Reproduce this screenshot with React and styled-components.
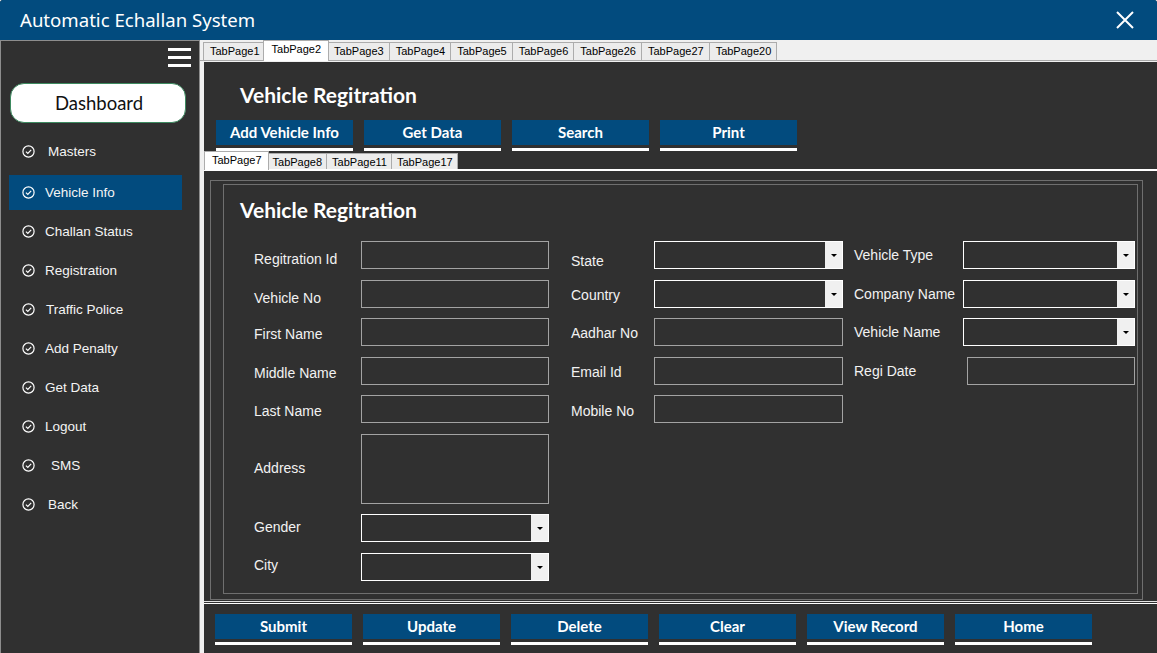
import React from "react";
import styled, { createGlobalStyle } from "styled-components";

const BLUE = "#024b7e";
const DARK = "#303030";
const LINE = "#6f6f6f";

const GlobalStyle = createGlobalStyle`
  html, body { margin: 0; padding: 0; background: #ffffff; }
  body { font-family: "Liberation Sans", Arial, sans-serif; }
  *, *::before, *::after { box-sizing: border-box; }
`;

const Window = styled.div`
  width: 1157px;
  height: 653px;
  display: flex;
  flex-direction: column;
  overflow: hidden;
  background: ${DARK};
  border-top-left-radius: 3px;
  border-top-right-radius: 3px;
`;

const TitleBar = styled.header`
  height: 40px;
  flex: none;
  background: ${BLUE};
  display: flex;
  align-items: center;
  justify-content: space-between;
  padding: 0 23px 0 20px;
`;

const Title = styled.h1`
  margin: 0;
  font: 400 18.6px/24px "Noto Sans", "Open Sans", sans-serif;
  color: #ffffff;
`;

const CloseButton = styled.button`
  width: 18px;
  height: 18px;
  padding: 0;
  border: 0;
  background: none;
  display: flex;
`;

const Body = styled.div`
  flex: 1;
  display: flex;
  min-height: 0;
`;

const Sidebar = styled.aside`
  width: 200px;
  flex: none;
  background: ${DARK};
  border: 1px solid #8d8d8d;
  border-bottom: 0;
  display: flex;
  flex-direction: column;
  padding-top: 7px;
`;

const MenuToggle = styled.button`
  align-self: flex-end;
  margin-right: 8px;
  width: 23px;
  height: 19px;
  padding: 0;
  border: 0;
  background: none;
  display: flex;
  flex-direction: column;
  justify-content: space-between;
`;

const ToggleBar = styled.span`
  display: block;
  height: 3px;
  background: #ffffff;
`;

const DashboardButton = styled.button`
  margin: 16px 0 0 9px;
  width: 176px;
  height: 40px;
  border: 1px solid #3d8a60;
  border-radius: 14px;
  background: #ffffff;
  color: #111111;
  font: 400 18.5px/1 Lato, "Noto Sans", sans-serif;
  padding: 0 0 0 2px;
`;

const Nav = styled.nav`
  margin-top: 11px;
  display: flex;
  flex-direction: column;
  gap: 4px;
`;

const NavItem = styled.a`
  height: 35px;
  width: 173px;
  margin-left: 8px;
  margin-bottom: ${(p) => p.$after || 0}px;
  display: flex;
  align-items: center;
  padding-left: 13px;
  background: ${(p) => (p.$active ? BLUE : "transparent")};
  color: #f4f4f4;
  font: 400 13.5px "Liberation Sans", Arial, sans-serif;
  text-decoration: none;
`;

const NavIcon = styled.svg`
  width: 13px;
  height: 13px;
  flex: none;
  margin-right: ${(p) => 10 + (p.$pad || 0)}px;
`;

const MainTabs = styled.section`
  flex: 1;
  min-width: 0;
  display: flex;
  flex-direction: column;
  background: #f0f0f0;
`;

const TabStrip = styled.div`
  height: ${(p) => (p.$inner ? 18 : 21)}px;
  flex: none;
  display: flex;
  align-items: flex-end;
  padding-left: ${(p) => (p.$inner ? 2 : 3)}px;
  background: ${(p) => (p.$inner ? DARK : "#f0f0f0")};
  border-bottom: ${(p) => (p.$inner ? "0" : "1px solid #a9a9a9")};
`;

const tabPadding = (p) => {
  if (p.$inner) return p.$active ? "1px 6px 0 7px" : "1px 4px 0 5px";
  return p.$active ? "1px 7px 0 8px" : "1px 5px 0 6px";
};

const Tab = styled.div`
  position: relative;
  height: ${(p) => (p.$active ? (p.$inner ? 19 : 21) : p.$inner ? 16 : 18)}px;
  margin: 0 ${(p) => (p.$active ? "-2px" : "-1px")} ${(p) => (p.$active ? "-1px" : "0")} ${(p) => (p.$active ? "-2px" : "0")};
  z-index: ${(p) => (p.$active ? 2 : 1)};
  padding: ${tabPadding};
  border: 1px solid #acacac;
  border-bottom: 0;
  background: ${(p) => (p.$active ? "#ffffff" : "#ececec")};
  color: #000000;
  font: 400 11px/14px "Liberation Sans", Arial, sans-serif;
  white-space: nowrap;
`;

const Page = styled.div`
  flex: 1;
  min-height: 0;
  margin: 1px 0 0 4px;
  background: ${DARK};
  display: flex;
  flex-direction: column;
`;

const Header = styled.div`
  flex: none;
  padding: 21px 0 0 12px;
`;

const Heading = styled.h2`
  margin: 0 0 0 ${(p) => p.$indent || 0}px;
  font: 700 21px/24px Lato, "Noto Sans", sans-serif;
  color: #ffffff;
`;

const ButtonRow = styled.div`
  display: flex;
  gap: 11px;
  margin-top: ${(p) => p.$top || 0}px;
`;

const ActionButton = styled.button`
  width: 137px;
  height: 31px;
  padding: 0 0 3px;
  border: 0;
  border-bottom: 3px solid #ffffff;
  background: ${BLUE};
  background-clip: content-box;
  color: #ffffff;
  font: 700 15px/25px Lato, "Noto Sans", sans-serif;
`;

const InnerTabs = styled.div`
  flex: 1;
  min-height: 0;
  display: flex;
  flex-direction: column;
`;

const InnerPanel = styled.div`
  flex: 1;
  min-height: 0;
  display: flex;
  border-top: 2px solid #ffffff;
  border-bottom: 1px solid #e4e4e4;
  padding: 9px 14px 1px 6px;
`;

const OuterGroup = styled.div`
  flex: 1;
  display: flex;
  border: 1px solid ${LINE};
  padding: 3px 4px 5px 12px;
`;

const InnerGroup = styled.div`
  flex: 1;
  border: 1px solid ${LINE};
  padding: 13px 0 0 16px;
`;

const FormColumns = styled.div`
  display: flex;
  align-items: flex-start;
  margin: 19px 0 0 14px;
`;

const FieldColumn = styled.div`
  display: grid;
  grid-template-columns: ${(p) => p.$label}px ${(p) => p.$input}px;
  grid-auto-rows: minmax(28px, auto);
  row-gap: 10.5px;
  margin-left: ${(p) => p.$offset || 0}px;
`;

const Label = styled.label`
  align-self: center;
  position: relative;
  top: ${(p) => p.$nudge || 0}px;
  color: #f2f2f2;
  font: 400 14px "Liberation Sans", Arial, sans-serif;
  white-space: nowrap;
`;

const TextBox = styled.input`
  width: ${(p) => p.$width || "100%"};
  height: 28px;
  justify-self: end;
  border: 1px solid #a3a3a3;
  background: transparent;
  padding: 0 4px;
  outline: none;
`;

const TextArea = styled.textarea`
  width: 100%;
  height: 70px;
  border: 1px solid #a3a3a3;
  background: transparent;
  resize: none;
  outline: none;
`;

const ComboBox = styled.div`
  height: 28px;
  border: 1px solid #ffffff;
  display: flex;
  justify-content: flex-end;
`;

const ComboArrow = styled.span`
  width: 17px;
  background: #f0f0f0;
  display: flex;
  align-items: center;
  justify-content: center;

  &::after {
    content: "";
    border-left: 3px solid transparent;
    border-right: 3px solid transparent;
    border-top: 3px solid #000000;
    margin-top: 1px;
  }
`;

const BottomBar = styled.div`
  flex: none;
  height: 50px;
  margin-top: 1px;
  border-top: 1px solid #ffffff;
  padding: 10px 0 0 11px;
`;

function Combo() {
  return (
    <ComboBox role="combobox">
      <ComboArrow />
    </ComboBox>
  );
}

function CheckIcon({ pad }) {
  return (
    <NavIcon $pad={pad} viewBox="0 0 13 13" fill="none" stroke="#ffffff" strokeWidth="1.2">
      <circle cx="6.5" cy="6.5" r="5.6" />
      <path d="M3.9 6.6 L5.8 8.4 L9.2 4.9" />
    </NavIcon>
  );
}

const navItems = [
  { label: "Masters", pad: 3, after: 2 },
  { label: "Vehicle Info", active: true },
  { label: "Challan Status" },
  { label: "Registration" },
  { label: "Traffic Police", pad: 1 },
  { label: "Add Penalty" },
  { label: "Get Data" },
  { label: "Logout" },
  { label: "SMS", pad: 6 },
  { label: "Back", pad: 3 },
];

const mainTabs = ["TabPage1", "TabPage2", "TabPage3", "TabPage4", "TabPage5", "TabPage6", "TabPage26", "TabPage27", "TabPage20"];
const innerTabs = ["TabPage7", "TabPage8", "TabPage11", "TabPage17"];

export default function App() {
  return (
    <>
      <GlobalStyle />
      <Window>
        <TitleBar>
          <Title>Automatic Echallan System</Title>
          <CloseButton aria-label="Close">
            <svg width="18" height="18" viewBox="0 0 18 18" stroke="#ffffff" strokeWidth="2" fill="none">
              <path d="M1 1 L17 17 M17 1 L1 17" />
            </svg>
          </CloseButton>
        </TitleBar>
        <Body>
          <Sidebar>
            <MenuToggle aria-label="Menu">
              <ToggleBar />
              <ToggleBar />
              <ToggleBar />
            </MenuToggle>
            <DashboardButton>Dashboard</DashboardButton>
            <Nav>
              {navItems.map((it) => (
                <NavItem key={it.label} $active={it.active} $after={it.after}>
                  <CheckIcon pad={it.pad} />
                  {it.label}
                </NavItem>
              ))}
            </Nav>
          </Sidebar>
          <MainTabs>
            <TabStrip>
              {mainTabs.map((t) => (
                <Tab key={t} $active={t === "TabPage2"}>{t}</Tab>
              ))}
            </TabStrip>
            <Page>
              <Header>
                <Heading $indent={24}>Vehicle Regitration</Heading>
                <ButtonRow $top={13}>
                  <ActionButton>Add Vehicle Info</ActionButton>
                  <ActionButton>Get Data</ActionButton>
                  <ActionButton>Search</ActionButton>
                  <ActionButton>Print</ActionButton>
                </ButtonRow>
              </Header>
              <InnerTabs>
                <TabStrip $inner>
                  {innerTabs.map((t) => (
                    <Tab key={t} $inner $active={t === "TabPage7"}>{t}</Tab>
                  ))}
                </TabStrip>
                <InnerPanel>
                  <OuterGroup>
                    <InnerGroup>
                      <Heading>Vehicle Regitration</Heading>
                      <FormColumns>
                        <FieldColumn $label={107} $input={188}>
                          <Label $nudge={4}>Regitration Id</Label>
                          <TextBox />
                          <Label $nudge={4}>Vehicle No</Label>
                          <TextBox />
                          <Label $nudge={2}>First Name</Label>
                          <TextBox />
                          <Label $nudge={2}>Middle Name</Label>
                          <TextBox />
                          <Label $nudge={2}>Last Name</Label>
                          <TextBox />
                          <Label $nudge={-1}>Address</Label>
                          <TextArea />
                          <Label $nudge={-1}>Gender</Label>
                          <Combo />
                          <Label $nudge={-2}>City</Label>
                          <Combo />
                        </FieldColumn>
                        <FieldColumn $label={83} $input={189} $offset={22}>
                          <Label $nudge={6}>State</Label>
                          <Combo />
                          <Label $nudge={1}>Country</Label>
                          <Combo />
                          <Label $nudge={1}>Aadhar No</Label>
                          <TextBox />
                          <Label $nudge={1}>Email Id</Label>
                          <TextBox />
                          <Label $nudge={2}>Mobile No</Label>
                          <TextBox />
                        </FieldColumn>
                        <FieldColumn $label={109} $input={172} $offset={11}>
                          <Label>Vehicle Type</Label>
                          <Combo />
                          <Label>Company Name</Label>
                          <Combo />
                          <Label>Vehicle Name</Label>
                          <Combo />
                          <Label>Regi Date</Label>
                          <TextBox $width="168px" />
                        </FieldColumn>
                      </FormColumns>
                    </InnerGroup>
                  </OuterGroup>
                </InnerPanel>
              </InnerTabs>
              <BottomBar>
                <ButtonRow>
                  <ActionButton>Submit</ActionButton>
                  <ActionButton>Update</ActionButton>
                  <ActionButton>Delete</ActionButton>
                  <ActionButton>Clear</ActionButton>
                  <ActionButton>View Record</ActionButton>
                  <ActionButton>Home</ActionButton>
                </ButtonRow>
              </BottomBar>
            </Page>
          </MainTabs>
        </Body>
      </Window>
    </>
  );
}
